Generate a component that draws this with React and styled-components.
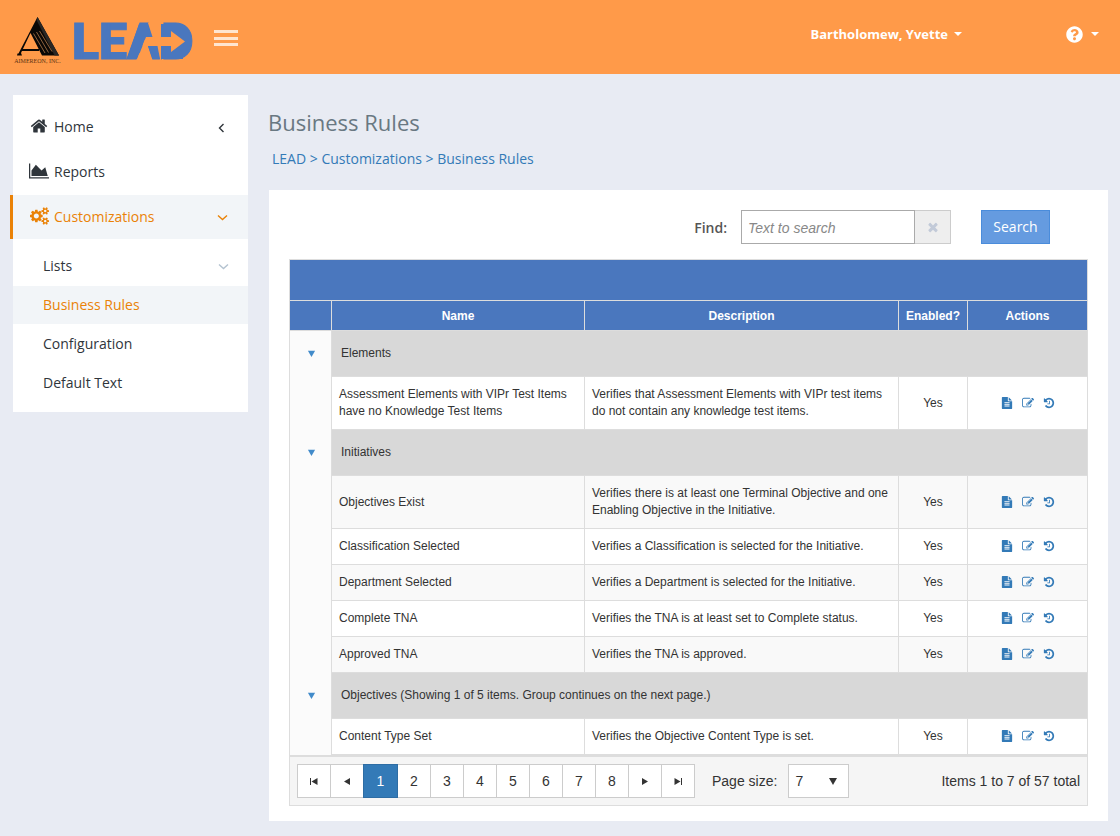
import React from "react";
import styled, { createGlobalStyle, css } from "styled-components";
import { FaQuestionCircle } from "react-icons/fa";

const sans = '"Open Sans", "Liberation Sans", sans-serif';
const arial = '"Liberation Sans", Arial, sans-serif';
const blue = "#4a77be";
const orange = "#ff9a49";
const accent = "#ea8207";

const Global = createGlobalStyle`
  * { box-sizing: border-box; }
  body { margin: 0; background: #e8ebf3; color: #333; font: 14px/20px ${sans}; }
  button, input, select { font: inherit; color: inherit; margin: 0; border-radius: 0; }
  a { text-decoration: none; color: #337ab7; }
`;

/* ---------- icons ---------- */
const smallGear = (dy) =>
  `M1920 ${1338 + dy}v140q0 16-149 31-12 27-30 52 51 113 51 138 0 4-4 7-122 71-124 71-8 0-46-47t-52-68q-20 2-30 2t-30-2q-14 21-52 68t-46 47q-2 0-124-71-4-3-4-7 0-25 51-138-18-25-30-52-149-15-149-31v-140q0-16 149-31 13-29 30-52-51-113-51-138 0-4 4-7 4-2 35-20t59-34 30-16q8 0 46 46.500t52 67.500q20-2 30-2t30 2q51-71 92-112l6-2q4 0 124 70 4 3 4 7 0 25-51 138 17 23 30 52 149 15 149 31z`;

const icons = {
  home: [1792, "M1472 992v480q0 26-19 45t-45 19h-384v-384h-256v384h-384q-26 0-45-19t-19-45v-480q0-1 .5-3t.5-3l575-474 575 474q1 2 1 6zm223-69l-62 74q-8 9-21 11h-3q-13 0-21-7l-692-577-692 577q-12 8-24 7-13-2-21-11l-62-74q-8-10-7-23.5t11-21.5l719-599q32-26 76-26t76 26l244 204v-195q0-14 9-23t23-9h192q14 0 23 9t9 23v408l219 182q10 8 11 21.5t-7 23.5z"],
  chart: [2048, "M2048 1536v128h-2048v-1536h128v1408h1920zm-384-1024l256 896h-1664v-576l448-576 576 576z"],
  cogs: [1920, "M896 896q0-106-75-181t-181-75-181 75-75 181 75 181 181 75 181-75 75-181zm768 512q0-52-38-90t-90-38-90 38-38 90q0 53 37.5 90.5t90.5 37.5 90.5-37.5 37.5-90.5zm0-1024q0-52-38-90t-90-38-90 38-38 90q0 53 37.5 90.5t90.5 37.5 90.5-37.5 37.5-90.5zm-384 421v185q0 10-7 19.5t-16 10.5l-155 24q-11 35-32 76 34 48 90 115 7 11 7 20 0 12-7 19-23 30-82.5 89.5t-78.5 59.5q-11 0-21-7l-115-90q-37 19-77 31-11 108-23 155-7 24-30 24h-186q-11 0-20-7.500t-10-17.500l-23-153q-34-10-75-31l-118 89q-7 7-20 7-11 0-21-8-144-133-144-160 0-9 7-19 10-14 41-53t47-61q-23-44-35-82l-152-24q-10-1-17-9.500t-7-19.500v-185q0-10 7-19.500t16-10.500l155-24q11-35 32-76-34-48-90-115-7-11-7-20 0-12 7-20 22-30 82-89t79-59q11 0 21 7l115 90q34-18 77-32 11-108 23-154 7-24 30-24h186q11 0 20 7.500t10 17.500l23 153q34 10 75 31l118-89q8-7 20-7 11 0 21 8 144 133 144 160 0 8-7 19-12 16-42 54t-45 60q23 48 34 82l152 23q10 2 17 10.500t7 19.500z" + smallGear(0) + smallGear(-1024)],
  file: [1792, "M1596 476q14 14 28 36h-472v-472q22 14 36 28zm-476 164h544v1056q0 40-28 68t-68 28h-1344q-40 0-68-28t-28-68v-1600q0-40 28-68t68-28h800v544q0 40 28 68t68 28zm160 736v-64q0-14-9-23t-23-9h-704q-14 0-23 9t-9 23v64q0 14 9 23t23 9h704q14 0 23-9t9-23zm0-256v-64q0-14-9-23t-23-9h-704q-14 0-23 9t-9 23v64q0 14 9 23t23 9h704q14 0 23-9t9-23zm0-256v-64q0-14-9-23t-23-9h-704q-14 0-23 9t-9 23v64q0 14 9 23t23 9h704q14 0 23-9t9-23z"],
  edit: [1792, "M888 1184l116-116-152-152-116 116v56h96v96h56zm440-720q-16-16-33 1l-350 350q-17 17-1 33t33-1l350-350q17-17 1-33zm80 594v190q0 119-84.5 203.5t-203.5 84.5h-832q-119 0-203.5-84.5t-84.5-203.5v-832q0-119 84.5-203.5t203.5-84.5h832q63 0 117 25 15 7 18 23 3 17-9 29l-49 49q-14 14-32 8-23-6-45-6h-832q-66 0-113 47t-47 113v832q0 66 47 113t113 47h832q66 0 113-47t47-113v-126q0-13 9-22l64-64q15-15 35-7t20 29zm-96-738l288 288-672 672h-288v-288zm444 132l-92 92-288-288 92-92q28-28 68-28t68 28l152 152q28 28 28 68t-28 68z"],
  history: [1792, "M1664 896q0 156-61 298t-164 245-245 164-298 61q-172 0-327-72.5t-264-204.5q-7-10-6.5-22.5t8.5-20.5l137-138q10-9 25-9 16 2 23 12 73 95 179 147t225 52q104 0 198.5-40.5t163.5-109.5 109.5-163.5 40.5-198.5-40.5-198.5-109.5-163.5-163.5-109.5-198.5-40.5q-98 0-188 35.5t-160 101.5l137 138q31 30 14 69-17 40-59 40h-448q-26 0-45-19t-19-45v-448q0-42 40-59 39-17 69 14l130 129q107-101 244.5-156.5t284.5-55.5q156 0 298 61t245 164 164 245 61 298zm-640-288v448q0 14-9 23t-23 9h-320q-14 0-23-9t-9-23v-64q0-14 9-23t23-9h224v-352q0-14 9-23t23-9h64q14 0 23 9t9 23z"],
  times: [1792, "M1490 1322q0 40-28 68l-136 136q-28 28-68 28t-68-28l-294-294-294 294q-28 28-68 28t-68-28l-136-136q-28-28-28-68t28-68l294-294-294-294q-28-28-28-68t28-68l136-136q28-28 68-28t68 28l294 294 294-294q28-28 68-28t68 28l136 136q28 28 28 68t-28 68l-294 294 294 294q28 28 28 68z"],
};

function Icon({ name, size }) {
  const [w, d] = icons[name];
  return (
    <svg height={size} width={Math.round((size * w) / 1792)} viewBox={`0 0 ${w} 1792`} fill="currentColor" fillRule="evenodd" aria-hidden="true">
      <path d={d} />
    </svg>
  );
}

const Chevron = ({ left }) => (
  <svg width="12" height="12" viewBox="0 0 12 12" fill="none" stroke="currentColor" strokeWidth="1.4" aria-hidden="true">
    <path d={left ? "M7.500 3L3.500 7L7.500 11" : "M2 4.500L6.500 8.500L11 4.500"} />
  </svg>
);

const pagerShapes = {
  first: "M1 2h1v7h-1zM8.500 2v7L2.500 5.500z",
  prev: "M8 2v7L2 5.500z",
  next: "M2 2v7L8 5.500z",
  last: "M8 2h1v7h-1zM1.500 2v7L7.500 5.500z",
  down: "M1 2h8L5 9z",
};
const Shape = ({ name, size = 10 }) => (
  <svg width={size} height={size} viewBox="0 0 10 10" fill="currentColor" aria-hidden="true">
    <path d={pagerShapes[name]} />
  </svg>
);

/* ---------- header ---------- */
const Header = styled.header`
  display: flex;
  align-items: flex-start;
  height: 74px;
  padding: 0 21px 0 14px;
  background: ${orange};
  color: #fff;
`;
const Company = styled.div`
  width: 47px;
  padding-top: 16px;
  display: flex;
  flex-direction: column;
  align-items: center;
  color: #5c3414;
  font: 6px/8px "Liberation Serif", serif;
  white-space: nowrap;
`;
const Brand = styled.a`
  display: block;
  height: 74px;
  margin-left: 8px;
`;
const MenuButton = styled.button`
  display: flex;
  flex-direction: column;
  justify-content: space-between;
  width: 24px;
  height: 16px;
  margin: 30px auto 0 17px;
  padding: 0;
  border: 0;
  background: none;
  span { height: 3px; background: #ffe5d0; }
`;
const HeaderButton = styled.button`
  display: flex;
  align-items: center;
  gap: ${(p) => p.$gap}px;
  height: 20px;
  margin-top: 24px;
  padding: 0;
  border: 0;
  background: none;
  font-weight: 700;
  font-size: 13px;
  & + & { margin-left: 104px; }
`;
const Caret = styled.span`
  border: 4px solid transparent;
  border-top-color: currentColor;
  border-bottom: 0;
`;

const Mark = () => (
  <svg width="46" height="41" viewBox="0 0 46 41" aria-hidden="true">
    <path d="M22.500 1L44 39.500H27L15.500 17L6 37L7 39.500H2L2.500 37.500H3.500Z" fill="#0a0806" />
    <path d="M22.500 1L44 39.500H39.500L21.500 4Z" fill="#2a2724" />
    <path d="M7 33H24V35H6Z" fill="#0a0806" />
    <path d="M18.500 17.500L30 37M21.500 16L33.500 36.500M24.500 15L37 35.500" stroke="#c98a55" strokeWidth="0.700" fill="none" />
  </svg>
);
const LeadText = styled.text`
  font: 900 50px Roboto, "Open Sans", sans-serif;
  stroke: ${blue};
  stroke-width: 1;
`;
const Lead = () => (
  <svg width="128" height="74" viewBox="69 0 128 74" fill={blue}>
    <LeadText x="72" y="59">LEAD</LeadText>
    {/* the arrow cut through the last two letters */}
    <rect x="161" y="24" width="22" height="35" />
    <path d="M139 24H148L152.500 37H146L137 59H127Z" />
    <path d="M137 60L146 37H171V31L185 41.500L171 52V46H148L152.500 60Z" fill={orange} />
    <path d="M148 23H161V60H160L154 37H152.500Z" fill={orange} />
    <path d="M148 46H157.500L160 59H152.500Z" />
  </svg>
);

/* ---------- sidebar ---------- */
const Body = styled.div`
  display: flex;
  align-items: flex-start;
  padding: 21px 12px 15px 13px;
  gap: 20px;
`;
const Sidebar = styled.nav`
  flex: 0 0 235px;
  display: flex;
  flex-direction: column;
  gap: 1px;
  padding: 10px 0;
  background: #fff;
`;
const NavLink = styled.a`
  display: flex;
  align-items: center;
  height: 44px;
  padding: 0 20px 0 16px;
  gap: 5px;
  color: #2f353b;
  & > svg { margin-left: auto; }
  ${(p) => p.$active && css`
    margin-left: -3px;
    border-left: 3px solid ${accent};
    background: #f2f5f8;
    color: ${accent};
  `}
`;
const NavIcon = styled.span`
  display: flex;
  justify-content: center;
  width: 20px;
  padding-bottom: 2px;
`;
const SubNav = styled.div`
  display: flex;
  flex-direction: column;
  gap: 1px;
  padding-top: 7px;
`;
const SubLink = styled.a`
  display: flex;
  align-items: center;
  justify-content: space-between;
  height: 38px;
  padding: 0 19px 0 30px;
  color: ${(p) => (p.$active ? accent : "#2f353b")};
  background: ${(p) => (p.$active ? "#f2f5f8" : "none")};
  svg { color: #b4c3d0; }
`;

/* ---------- content ---------- */
const Main = styled.main`
  flex: 1;
  min-width: 0;
`;
const Title = styled.h1`
  margin: 12px 0 0;
  font-size: 22px;
  line-height: 30px;
  font-weight: 400;
  color: #697882;
`;
const Crumbs = styled.div`
  margin: 12px 0 21px 4px;
  color: #337ab7;
`;
const Card = styled.section`
  margin-left: 1px;
  padding: 20px 20px 15px;
  background: #fff;
`;
const SearchForm = styled.form`
  display: flex;
  justify-content: flex-end;
  height: 34px;
  margin: 0 38px 15px 0;
`;
const FindLabel = styled.label`
  margin-right: 14px;
  line-height: 36px;
  font-weight: 600;
  color: #555;
`;
const FindInput = styled.input`
  width: 174px;
  padding: 2px 6px 0;
  border: 1px solid #aaa;
  background: #fff;
  font-family: ${arial};
  &::placeholder { color: #888; font-style: italic; opacity: 1; }
`;
const ClearButton = styled.button`
  display: flex;
  align-items: center;
  justify-content: center;
  width: 36px;
  padding: 0;
  border: 1px solid #ccc;
  border-left: 0;
  background: #eee;
  color: #c2cad8;
`;
const SearchButton = styled.button`
  width: 69px;
  margin-left: 30px;
  padding: 0;
  border: 1px solid #4a8cdb;
  background: #659be0;
  color: #fff;
`;

const Grid = styled.div`
  border: 1px solid #ddd;
  font-family: ${arial};
`;
const CommandBar = styled.div`
  height: 41px;
  background: ${blue};
  border-bottom: 1px solid #ddd;
`;
const Table = styled.table`
  width: 100%;
  table-layout: fixed;
  border-collapse: separate;
  border-spacing: 0;
  font-size: 12px;
  line-height: 17px;
`;
const Col = styled.col`
  width: ${(p) => (p.$w ? `${p.$w}px` : "auto")};
`;
const Th = styled.th`
  height: 30px;
  padding: 1px 0 0;
  background: ${blue};
  color: #fff;
  border-bottom: 1px solid #ddd;
  & + & { border-left: 1px solid #ddd; }
`;
const Td = styled.td`
  padding: 9px 7px;
  border-left: 1px solid #ddd;
  border-bottom: 1px solid #ddd;
  background: ${(p) => (p.$alt ? "#f9f9f9" : "#fff")};
`;
const CenterTd = styled(Td)`
  text-align: center;
`;
const GroupTd = styled(Td)`
  height: 46px;
  padding-left: 9px;
  padding-bottom: 10px;
  background: #d8d8d8;
`;
const IndentTd = styled.td`
  padding: 0 0 0 2px;
  background: #fbfbfb;
  text-align: center;
`;
const ToggleButton = styled.button`
  display: inline-flex;
  padding: 0;
  border: 0;
  background: none;
  color: #428bca;
`;
const Actions = styled.div`
  display: flex;
  justify-content: center;
  gap: 9px;
`;
const Action = styled.button`
  display: flex;
  padding: 0 0 1px;
  border: 0;
  background: none;
  color: #337ab7;
`;

const Pager = styled.div`
  display: flex;
  align-items: center;
  padding: 7px;
  border-top: 2px solid #ddd;
  background: #f5f5f5;
`;
const PageButton = styled.button`
  display: flex;
  align-items: center;
  justify-content: center;
  width: ${(p) => (p.$active ? 35 : 34)}px;
  height: 34px;
  padding: 0;
  border: 1px solid ${(p) => (p.$active ? "#2e6da4" : "#ccc")};
  background: ${(p) => (p.$active ? "#337ab7" : "#fff")};
  color: ${(p) => (p.$active ? "#fff" : "#333")};
  z-index: ${(p) => (p.$active ? 1 : 0)};
  & + & { margin-left: -1px; }
`;
const SizeLabel = styled.label`
  margin: 0 11px 0 17px;
`;
const SelectWrap = styled.div`
  display: grid;
  align-items: center;
  width: 61px;
  height: 34px;
  & > * { grid-area: 1 / 1; }
  svg { justify-self: end; margin-right: 11px; pointer-events: none; }
`;
const Select = styled.select`
  appearance: none;
  height: 34px;
  padding: 0 6px;
  border: 1px solid #ccc;
  background: #fff;
`;
const Total = styled.div`
  margin-left: auto;
`;

const groups = [
  { title: "Elements", rows: [
    ["Assessment Elements with VIPr Test Items have no Knowledge Test Items", "Verifies that Assessment Elements with VIPr test items do not contain any knowledge test items."],
  ] },
  { title: "Initiatives", altFirst: true, rows: [
    ["Objectives Exist", "Verifies there is at least one Terminal Objective and one Enabling Objective in the Initiative."],
    ["Classification Selected", "Verifies a Classification is selected for the Initiative."],
    ["Department Selected", "Verifies a Department is selected for the Initiative."],
    ["Complete TNA", "Verifies the TNA is at least set to Complete status."],
    ["Approved TNA", "Verifies the TNA is approved."],
  ] },
  { title: "Objectives (Showing 1 of 5 items. Group continues on the next page.)", rows: [
    ["Content Type Set", "Verifies the Objective Content Type is set."],
  ] },
];

function RuleRow({ name, description, alt }) {
  return (
    <tr>
      <IndentTd />
      <Td $alt={alt}>{name}</Td>
      <Td $alt={alt}>{description}</Td>
      <CenterTd $alt={alt}>Yes</CenterTd>
      <CenterTd $alt={alt}>
        <Actions>
          <Action aria-label="View"><Icon name="file" size={12} /></Action>
          <Action aria-label="Edit"><Icon name="edit" size={12} /></Action>
          <Action aria-label="History"><Icon name="history" size={12} /></Action>
        </Actions>
      </CenterTd>
    </tr>
  );
}

export default function App() {
  return (
    <>
      <Global />
      <Header>
        <Company><Mark />AIMEREON, INC.</Company>
        <Brand href="#" aria-label="LEAD"><Lead /></Brand>
        <MenuButton aria-label="Toggle menu"><span /><span /><span /></MenuButton>
        <HeaderButton $gap={6}>Bartholomew, Yvette<Caret /></HeaderButton>
        <HeaderButton $gap={8} aria-label="Help"><FaQuestionCircle size={17} /><Caret /></HeaderButton>
      </Header>
      <Body>
        <Sidebar>
          <NavLink href="#"><NavIcon><Icon name="home" size={18} /></NavIcon>Home<Chevron left /></NavLink>
          <NavLink href="#"><NavIcon><Icon name="chart" size={18} /></NavIcon>Reports</NavLink>
          <NavLink href="#" $active><NavIcon><Icon name="cogs" size={18} /></NavIcon>Customizations<Chevron /></NavLink>
          <SubNav>
            <SubLink href="#">Lists<Chevron /></SubLink>
            <SubLink href="#" $active>Business Rules</SubLink>
            <SubLink href="#">Configuration</SubLink>
            <SubLink href="#">Default Text</SubLink>
          </SubNav>
        </Sidebar>
        <Main>
          <Title>Business Rules</Title>
          <Crumbs>
            <a href="#">LEAD</a> &gt; <a href="#">Customizations</a> &gt; <a href="#">Business Rules</a>
          </Crumbs>
          <Card>
            <SearchForm onSubmit={(e) => e.preventDefault()}>
              <FindLabel htmlFor="find">Find:</FindLabel>
              <FindInput id="find" placeholder="Text to search" />
              <ClearButton type="button" aria-label="Clear"><Icon name="times" size={14} /></ClearButton>
              <SearchButton>Search</SearchButton>
            </SearchForm>
            <Grid>
              <CommandBar />
              <Table>
                <colgroup><Col $w={41} /><Col $w={253} /><Col /><Col $w={69} /><Col $w={120} /></colgroup>
                <thead>
                  <tr><Th /><Th>Name</Th><Th>Description</Th><Th>Enabled?</Th><Th>Actions</Th></tr>
                </thead>
                <tbody>
                  {groups.map((g) => (
                    <React.Fragment key={g.title}>
                      <tr>
                        <IndentTd><ToggleButton aria-label="Collapse group"><Shape name="down" size={9} /></ToggleButton></IndentTd>
                        <GroupTd colSpan={4}>{g.title}</GroupTd>
                      </tr>
                      {g.rows.map(([n, d], i) => (
                        <RuleRow key={n} name={n} description={d} alt={Boolean(g.altFirst) && i % 2 === 0} />
                      ))}
                    </React.Fragment>
                  ))}
                </tbody>
              </Table>
              <Pager>
                <PageButton aria-label="First page"><Shape name="first" /></PageButton>
                <PageButton aria-label="Previous page"><Shape name="prev" /></PageButton>
                {[1, 2, 3, 4, 5, 6, 7, 8].map((n) => <PageButton key={n} $active={n === 1}>{n}</PageButton>)}
                <PageButton aria-label="Next page"><Shape name="next" /></PageButton>
                <PageButton aria-label="Last page"><Shape name="last" /></PageButton>
                <SizeLabel htmlFor="size">Page size:</SizeLabel>
                <SelectWrap>
                  <Select id="size" defaultValue="7"><option>7</option><option>20</option></Select>
                  <Shape name="down" />
                </SelectWrap>
                <Total>Items 1 to 7 of 57 total</Total>
              </Pager>
            </Grid>
          </Card>
        </Main>
      </Body>
    </>
  );
}
